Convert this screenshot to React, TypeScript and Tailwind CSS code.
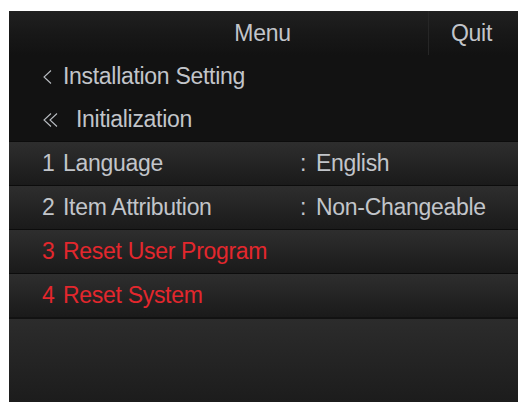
import React from "react";

const items = [
  { n: "1", label: "Language", value: "English", red: false },
  { n: "2", label: "Item Attribution", value: "Non-Changeable", red: false },
  { n: "3", label: "Reset User Program", value: "", red: true },
  { n: "4", label: "Reset System", value: "", red: true },
];

function Chevron() {
  return (
    <svg width="9" height="14" viewBox="0 0 9 14" className="shrink-0">
      <polyline points="8,0.5 1,7 8,13.5" fill="none" stroke="#b9bdc2" strokeWidth="1.1" />
    </svg>
  );
}

export default function App() {
  return (
    <div className="w-[531px] h-[409px] bg-white pt-[11px] pl-[9px]">
      <div
        className="w-[509px] h-[391px] flex flex-col bg-[#121212] text-[23px] tracking-[-0.3px] leading-none text-[#c2c5ca] overflow-hidden"
        style={{ fontFamily: '"Liberation Sans", Arial, sans-serif' }}
      >
        {/* header */}
        <div className="h-[44px] flex bg-gradient-to-b from-[#202020] via-[#181818] to-[#121212]">
          <div className="flex-1 flex items-center justify-center pl-[88px]">Menu</div>
          <div className="w-px bg-[#0b0b0b] border-r border-[#262626]" />
          <div className="w-[89px] flex items-center justify-center pr-[4px]">Quit</div>
        </div>

        {/* breadcrumbs */}
        <div className="h-[43px] flex items-center pl-[34px] gap-[11px]">
          <Chevron />
          <span>Installation Setting</span>
        </div>
        <div className="h-[43px] flex items-center pl-[34px]">
          <Chevron />
          <span className="-ml-[3px] flex">
            <Chevron />
          </span>
          <span className="ml-[18px]">Initialization</span>
        </div>

        {/* list */}
        {items.map((it) => (
          <div
            key={it.n}
            className={`h-[44px] flex items-center pl-[33px] border-t border-[#0c0c0c] bg-gradient-to-b from-[#2e2e2e] via-[#242424] to-[#1a1a1a] ${
              it.red ? "text-[#e3272d]" : ""
            }`}
          >
            <span className="w-[21px]">{it.n}</span>
            <span className="w-[237px]">{it.label}</span>
            {it.value && (
              <>
                <span className="w-[16px]">:</span>
                <span>{it.value}</span>
              </>
            )}
          </div>
        ))}

        {/* empty area */}
        <div className="flex-1 border-t-2 border-[#121212] bg-gradient-to-b from-[#2c2c2c] via-[#242424] to-[#1c1c1c]" />
      </div>
    </div>
  );
}
